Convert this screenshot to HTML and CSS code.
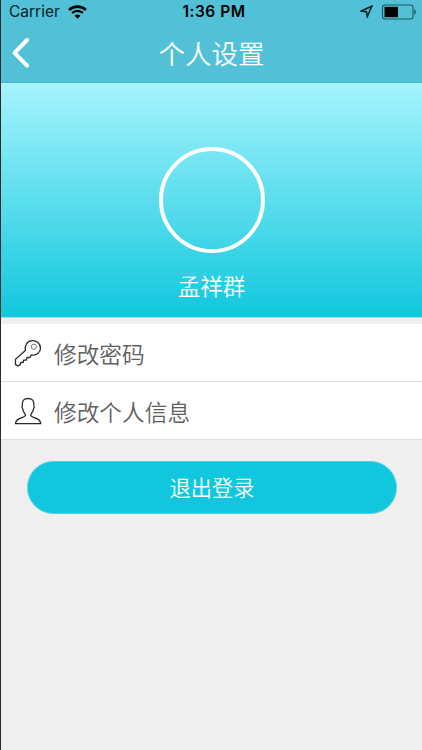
FILE: index.html
```html
<!DOCTYPE html>
<html lang="zh-CN">

<head>
    <meta charset="UTF-8" />
    <meta name="viewport" content="width=device-width, initial-scale=1.0" />
    <title>个人设置</title>
    <link rel="stylesheet" href="styles.css">
</head>

<body>
    <div class="page">
        <header class="header">
            <div class="status-bar">
                <div class="status-left">
                    <span class="carrier">Carrier</span>
                    <svg class="wifi" width="19" height="14" viewBox="0 0 18 13">
                        <path d="M1 4.6C5.5 .3 12.500 .3 17 4.600" fill="none" stroke="#000" stroke-width="2.500" />
                        <path d="M3.800 7.500C6.800 4.700 11.200 4.700 14.200 7.500" fill="none" stroke="#000" stroke-width="2" />
                        <path d="M6.200 10Q9 7.600 11.800 10L9 12.800Z" fill="#000" />
                    </svg>
                </div>
                <div class="time">1:36 PM</div>
                <div class="status-right">
                    <svg width="13" height="13" viewBox="0 0 13 13">
                        <path d="M1.300 6L11.700 1.200L7.300 11.700L6.400 6.700Z" fill="none" stroke="#06222a" stroke-width="1.600" />
                    </svg>
                    <svg width="36" height="16" viewBox="0 0 36 16">
                        <rect x="1.500" y="1" width="30.500" height="14" rx="2.500" fill="none" stroke="#235763" stroke-width="1.100" />
                        <rect x="3.500" y="2.800" width="13.500" height="10.400" fill="#000" />
                        <path d="M33.700 5.700Q35.200 8 33.700 10.300Z" fill="#235763" stroke="#235763" stroke-width=".7" />
                    </svg>
                </div>
            </div>
            <div class="nav-bar">
                <svg class="back" width="18" height="30" viewBox="0 0 18 30">
                    <path d="M15 2L2.500 14.800L15 27.600" fill="none" stroke="#fff" stroke-width="4" stroke-linecap="round" stroke-linejoin="round" />
                </svg>
                <div class="title">个人设置</div>
            </div>
        </header>

        <div class="profile">
            <div class="avatar"></div>
            <div class="name">孟祥群</div>
        </div>

        <div class="menu">
            <div class="menu-item">
                <svg width="28" height="28" viewBox="0 0 28 28" fill="none" stroke="#2b2b2b" stroke-width="1.300" stroke-linejoin="round">
                    <path d="M1.500 20.300L11.400 11.600C10.300 6.200 13.500 1.700 18.200 1.600C23 1.500 26.500 4.900 26.500 9C26.500 13.600 22.500 16.900 17.400 15.900L15.900 18.500L13.100 18.500L12.400 21L9.600 21.100L9.300 23.300L6.700 23.500L6.200 25.700L3.900 26.900L1.500 25.700Z" />
                    <circle cx="19.800" cy="7.800" r="2.600" stroke="#777" stroke-width="1" />
                </svg>
                <span class="label">修改密码</span>
            </div>
            <div class="menu-item">
                <svg width="28" height="28" viewBox="0 0 28 28" fill="none" stroke="#2b2b2b" stroke-width="1.300" stroke-linejoin="round">
                    <path d="M1.500 26.700C1.600 24.300 2.600 23 4.800 21.900L9.800 19.800C11.600 18.900 11.900 17.900 10.700 16.500C9.400 14.900 8.800 13.500 8.600 11.600C8 10.800 7.800 9.400 8.300 8.500C8 3.700 9.900 1.500 14.100 1.500S20.200 3.700 19.900 8.500C20.400 9.400 20.200 10.800 19.600 11.600C19.400 13.500 18.800 14.900 17.500 16.500C16.300 17.900 16.600 18.900 18.400 19.800L23.400 21.900C25.600 23 26.600 24.300 26.700 26.700Z" />
                </svg>
                <span class="label">修改个人信息</span>
            </div>
        </div>

        <button class="logout">退出登录</button>
    </div>
</body>

</html>
```

FILE: styles.css
```css
* {
    box-sizing: border-box;
}

body {
    margin: 0;
    font-family: "Liberation Sans", "Noto Sans CJK SC", sans-serif;
    background-color: #efefef;
}

.page {
    height: 750px;
    border-left: 1px solid #2b2b2e;
    overflow: hidden;
}

.header {
    height: 83px;
    background: #52c1d8;
    border-bottom: 1px solid #4db1c5;
}

.status-bar {
    display: grid;
    grid-template-columns: 1fr auto 1fr;
    align-items: center;
    height: 23px;
    padding: 0 5px 0 8px;
    color: #06222a;
}

.status-left,
.status-right {
    display: flex;
    align-items: center;
    gap: 8px;
}

.status-right {
    justify-content: flex-end;
}

.carrier {
    font-family: Inter, sans-serif;
    font-size: 15.5px;
}

.time {
    font-family: Inter, sans-serif;
    font-size: 15.5px;
    font-weight: 600;
    letter-spacing: 0.5px;
    padding-left: 2px;
    color: #000;
}

.nav-bar {
    display: grid;
    grid-template-columns: 50px 1fr 50px;
    align-items: center;
    height: 60px;
}

.back {
    margin-left: 11px;
}

.title {
    padding-top: 3px;
    font-size: 26.5px;
    font-weight: 350;
    line-height: 40px;
    text-align: center;
    color: #fff;
}

.profile {
    display: flex;
    flex-direction: column;
    align-items: center;
    height: 235px;
    padding-top: 64px;
    background: linear-gradient(#a6f4fd, #11c7de);
    border-bottom: 1px solid #9de4ed;
}

.avatar {
    width: 106px;
    height: 106px;
    border: 4px solid #fff;
    border-radius: 50%;
}

.name {
    margin-top: 19px;
    font-size: 22.5px;
    font-weight: 350;
    line-height: 32px;
    color: #fff;
}

.menu {
    margin-top: 6px;
}

.menu-item {
    display: flex;
    align-items: center;
    gap: 12px;
    height: 58px;
    padding-left: 13px;
    background: #fff;
    border-bottom: 1px solid #dfdfdf;
    font-size: 22.7px;
    font-weight: 350;
    color: #606060;
}

.label {
    padding-top: 2px;
}

.logout {
    display: block;
    width: 370px;
    height: 53px;
    margin: 21px 0 0 26px;
    padding: 0 0 2px;
    border: 1px solid #50d2e3;
    border-radius: 27px;
    background: #11c7de;
    font-family: inherit;
    font-size: 21.3px;
    font-weight: 350;
    color: #fff;
}
```
